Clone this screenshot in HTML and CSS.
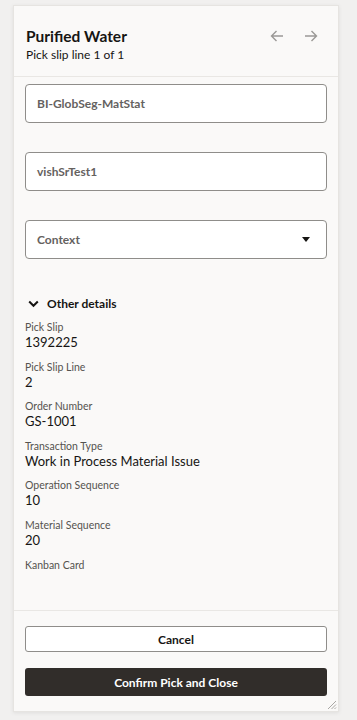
FILE: index.html
```html
<!DOCTYPE html>
<html>
<head>
<meta charset="utf-8">
<link rel="stylesheet" href="styles.css">
</head>
<body>
<div class="card">
  <div class="header">
    <div class="titles">
      <div class="title">Purified Water</div>
      <div class="subtitle">Pick slip line 1 of 1</div>
    </div>
    <div class="nav">
      <svg class="arrow" width="14" height="12" viewBox="0 0 14 12"><path d="M13 6H1.5M6.5 1L1.5 6l5 5" fill="none" stroke="#9a9896" stroke-width="1.4"/></svg>
      <svg class="arrow" width="14" height="12" viewBox="0 0 14 12"><path d="M1 6h11.5M7.5 1l5 5-5 5" fill="none" stroke="#9a9896" stroke-width="1.4"/></svg>
    </div>
  </div>
  <div class="content">
    <div class="field"><span>BI-GlobSeg-MatStat</span></div>
    <div class="field"><span>vishSrTest1</span></div>
    <div class="field select"><span>Context</span>
      <svg width="8" height="5" viewBox="0 0 8 5"><path d="M0 0h8L4 5z" fill="#161513"/></svg>
    </div>
    <div class="details-head">
      <svg width="11" height="8" viewBox="0 0 11 8"><path d="M1.2 1.5l4.3 4.3 4.3-4.3" fill="none" stroke="#161513" stroke-width="2"/></svg>
      <span>Other details</span>
    </div>
    <div class="item"><div class="label">Pick Slip</div><div class="value">1392225</div></div>
    <div class="item"><div class="label">Pick Slip Line</div><div class="value">2</div></div>
    <div class="item"><div class="label">Order Number</div><div class="value">GS-1001</div></div>
    <div class="item"><div class="label">Transaction Type</div><div class="value">Work in Process Material Issue</div></div>
    <div class="item"><div class="label">Operation Sequence</div><div class="value">10</div></div>
    <div class="item"><div class="label">Material Sequence</div><div class="value">20</div></div>
    <div class="item"><div class="label">Kanban Card</div><div class="value"></div></div>
  </div>
  <div class="footer">
    <button class="btn cancel">Cancel</button>
    <button class="btn confirm">Confirm Pick and Close</button>
  </div>
  <svg class="grip" width="12" height="12" viewBox="0 0 12 12"><path d="M11 3L3 11M11 6.5L6.5 11M11 9.5L9.5 11" stroke="#a9a7a4" stroke-width="1"/></svg>
</div>
</body>
</html>
```
FILE: styles.css
```css
html, body {
  margin: 0;
  padding: 0;
}
body {
  background: #f1f0ef;
  font-family: Lato, "Noto Sans", sans-serif;
  color: #161513;
  height: 720px;
  overflow: hidden;
}
.card {
  position: relative;
  margin: 5px 0 0 13px;
  width: 326px;
  height: 707px;
  box-sizing: border-box;
  background: #faf9f8;
  border: 1px solid #e6e4e1;
  box-shadow: 0 1px 4px rgba(0,0,0,0.08);
  display: flex;
  flex-direction: column;
}
.header {
  display: flex;
  justify-content: space-between;
  padding: 20px 12px 13px 12px;
  border-bottom: 1px solid #e9e7e4;
}
.title {
  font-size: 15.5px;
  font-weight: 700;
  line-height: 20px;
}
.subtitle {
  font-size: 12px;
  line-height: 16px;
  margin-top: 1px;
}
.nav {
  display: flex;
  gap: 20px;
  padding-top: 4px;
  padding-right: 8px;
}
.content {
  flex: 1;
  padding: 7px 11px 0 11px;
}
.field {
  height: 39px;
  box-sizing: border-box;
  border: 1px solid #8f8d8a;
  border-radius: 4px;
  background: #ffffff;
  display: flex;
  align-items: center;
  justify-content: space-between;
  padding: 0 16px 0 11px;
  font-size: 12px;
  font-weight: 700;
  color: #65625f;
  margin-bottom: 29px;
}
.details-head {
  display: flex;
  align-items: center;
  gap: 8px;
  padding-left: 3px;
  margin-top: 37px;
  font-size: 12px;
  font-weight: 700;
  line-height: 16px;
}
.item {
  margin-top: 9.6px;
}
.details-head + .item {
  margin-top: 8px;
}
.label {
  font-size: 10.5px;
  line-height: 14px;
  color: #55534f;
  font-weight: 400;
}
.value {
  font-size: 13px;
  line-height: 16px;
  min-height: 16px;
}
.footer {
  border-top: 1px solid #e9e7e4;
  padding: 15px 11px 15px 11px;
  display: flex;
  flex-direction: column;
  gap: 16px;
}
.btn {
  font-family: Lato, "Noto Sans", sans-serif;
  font-size: 12px;
  font-weight: 700;
  border-radius: 3px;
  cursor: pointer;
}
.cancel {
  height: 26px;
  background: #ffffff;
  border: 1px solid #8f8d8a;
  color: #161513;
}
.confirm {
  height: 28px;
  background: #312d2a;
  border: none;
  color: #ffffff;
}
.grip {
  position: absolute;
  right: 1px;
  bottom: 1px;
}
```
